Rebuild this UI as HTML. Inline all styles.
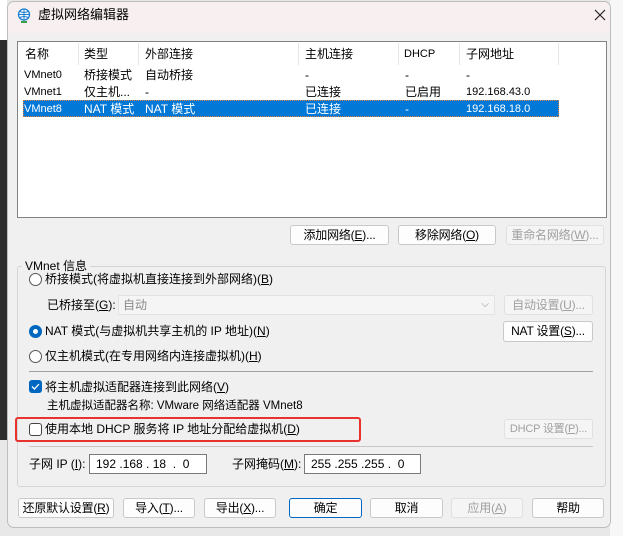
<!DOCTYPE html>
<html><head><meta charset="utf-8"><style>
*{box-sizing:border-box;margin:0;padding:0}
body{width:623px;height:536px;overflow:hidden;background:#e8e8e8;font-family:"Liberation Sans","Noto Sans CJK SC",sans-serif;font-size:12px;line-height:16px;color:#000;position:relative}
.a{position:absolute;white-space:nowrap;line-height:16px}
.btn{position:absolute;height:20px;border:1px solid #c9c9c9;border-radius:3px;background:#fdfdfd;text-align:center;line-height:18px;font-size:12px;white-space:nowrap;letter-spacing:-0.2px}
.dis{color:#a0a0a0;background:#f5f5f5;border-color:#e0e0e0}
.radio{position:absolute;width:13px;height:13px;border:1px solid #555;border-radius:50%;background:#fff}
.sep{position:absolute;height:1px;background:#a0a0a0}
.inp{position:absolute;height:20px;border:1px solid #7a7a7a;background:#fff;font-size:12px;line-height:18px;padding-left:6px;white-space:pre}
.s{font-size:11px}
</style></head><body>
<div class="a" style="left:0;top:0;width:7px;height:40px;background:#fff"></div>
<div class="a" style="left:0;top:40px;width:7px;height:400px;background:#2d2d2d"></div>
<div class="a" style="left:610px;top:0;width:13px;height:536px;background:#f7f7f7"></div>
<div class="a" style="left:7px;top:1px;width:604px;height:527px;background:#f0f0f0;border:1px solid #bdbdbd;border-radius:7px;overflow:hidden">
 <div class="a" style="left:0;top:0;width:604px;height:31px;background:#f7eff0"></div>
</div>
<svg class="a" style="left:17px;top:8px" width="14" height="16" viewBox="0 0 14 16"><circle cx="7" cy="6.5" r="5.5" fill="#fff" stroke="#1a7fd4" stroke-width="1.3"/><path d="M1.5 6.5h11M7 1v11M3 3.5q4 2 8 0M3 9.5q4-2 8 0" stroke="#1a7fd4" fill="none"/><path d="M4 14h6" stroke="#3aa04a" stroke-width="2"/></svg>
<div class="a" style="left:38px;top:7px;font-size:13px">虚拟网络编辑器</div>
<svg class="a" style="left:594px;top:9px" width="12" height="12"><path d="M1 1L11 11M11 1L1 11" stroke="#222" stroke-width="1.2"/></svg>

<div class="a" style="left:17px;top:41px;width:590px;height:177px;background:#fff;border:1px solid #828282"></div>
<div class="a" style="left:78px;top:43px;width:1px;height:22px;background:#e5e5e5"></div>
<div class="a" style="left:138px;top:43px;width:1px;height:22px;background:#e5e5e5"></div>
<div class="a" style="left:298px;top:43px;width:1px;height:22px;background:#e5e5e5"></div>
<div class="a" style="left:398px;top:43px;width:1px;height:22px;background:#e5e5e5"></div>
<div class="a" style="left:459px;top:43px;width:1px;height:22px;background:#e5e5e5"></div>
<div class="a" style="left:558px;top:43px;width:1px;height:22px;background:#e5e5e5"></div>
<div class="a" style="left:25px;top:46px">名称</div><div class="a" style="left:84px;top:46px">类型</div><div class="a" style="left:145px;top:46px">外部连接</div><div class="a" style="left:305px;top:46px">主机连接</div><div class="a s" style="left:404px;top:46px">DHCP</div><div class="a" style="left:466px;top:46px">子网地址</div>
<div class="a s" style="left:24px;top:67px">VMnet0</div><div class="a" style="left:84px;top:67px">桥接模式</div><div class="a" style="left:145px;top:67px">自动桥接</div><div class="a" style="left:305px;top:67px">-</div><div class="a" style="left:405px;top:67px">-</div><div class="a" style="left:466px;top:67px">-</div>
<div class="a s" style="left:24px;top:84px">VMnet1</div><div class="a" style="left:84px;top:84px">仅主机...</div><div class="a" style="left:145px;top:84px">-</div><div class="a" style="left:305px;top:84px">已连接</div><div class="a" style="left:405px;top:84px">已启用</div><div class="a s" style="left:466px;top:84px">192.168.43.0</div>
<div class="a" style="left:23px;top:100px;width:536px;height:17px;background:#0078d7;border:1px dotted #e08040"></div>
<div class="a s" style="left:24px;top:101px;color:#fff">VMnet8</div><div class="a" style="left:84px;top:101px;color:#fff">NAT 模式</div><div class="a" style="left:145px;top:101px;color:#fff">NAT 模式</div><div class="a" style="left:305px;top:101px;color:#fff">已连接</div><div class="a" style="left:405px;top:101px;color:#fff">-</div><div class="a s" style="left:466px;top:101px;color:#fff">192.168.18.0</div>

<div class="btn" style="left:290px;top:225px;width:99px">添加网络(<u>E</u>)...</div>
<div class="btn" style="left:398px;top:225px;width:98px">移除网络(<u>O</u>)</div>
<div class="btn dis" style="left:506px;top:225px;width:98px">重命名网络(<u>W</u>)...</div>

<div class="a" style="left:17px;top:266px;width:589px;height:221px;border:1px solid #d5d5d5;border-radius:3px"></div>
<div class="a" style="left:22px;top:258px;background:#f0f0f0;padding:0 3px">VMnet 信息</div>

<div class="radio" style="left:29px;top:273px"></div>
<div class="a" style="left:45px;top:271px">桥接模式(将虚拟机直接连接到外部网络)(<u>B</u>)</div>
<div class="a" style="left:47px;top:297px">已桥接至(<u>G</u>):</div>
<div class="a" style="left:118px;top:295px;width:377px;height:20px;border:1px solid #e3e3e3;background:#f5f5f5;color:#8a8a8a;padding-left:4px;line-height:18px">自动<span style="position:absolute;right:5px;top:0;font-size:10px">⌵</span></div>
<div class="btn dis" style="left:504px;top:295px;width:89px">自动设置(<u>U</u>)...</div>
<div class="radio" style="left:29px;top:325px;border:4px solid #0067c0"></div>
<div class="a" style="left:45px;top:323px">NAT 模式(与虚拟机共享主机的 IP 地址)(<u>N</u>)</div>
<div class="btn" style="left:503px;top:321px;width:90px;height:21px">NAT 设置(<u>S</u>)...</div>
<div class="radio" style="left:29px;top:350px"></div>
<div class="a" style="left:45px;top:348px">仅主机模式(在专用网络内连接虚拟机)(<u>H</u>)</div>
<div class="sep" style="left:29px;top:371px;width:564px"></div>
<div class="a" style="left:29px;top:380px;width:13px;height:13px;background:#0067c0;border-radius:3px"><svg width="13" height="13"><path d="M3 6.5l2.5 2.5 4.5-5" stroke="#fff" stroke-width="1.3" fill="none"/></svg></div>
<div class="a" style="left:45px;top:379px">将主机虚拟适配器连接到此网络(<u>V</u>)</div>
<div class="a" style="left:47px;top:398px;font-size:11.5px">主机虚拟适配器名称: VMware 网络适配器 VMnet8</div>
<div class="a" style="left:15px;top:417px;width:346px;height:25px;border:2px solid #e8322e;border-radius:3px"></div>
<div class="a" style="left:29px;top:423px;width:13px;height:13px;border:1px solid #444;border-radius:3px;background:#fff"></div>
<div class="a" style="left:45px;top:421px">使用本地 DHCP 服务将 IP 地址分配给虚拟机(<u>D</u>)</div>
<div class="btn dis" style="left:504px;top:419px;width:89px;font-size:11px">DHCP 设置(<u>P</u>)...</div>
<div class="sep" style="left:29px;top:446px;width:564px;background:#c8c8c8"></div>
<div class="a" style="left:29px;top:456px">子网 IP (<u>I</u>):</div>
<div class="inp" style="left:89px;top:454px;width:118px">192 .168 . 18  .  0</div>
<div class="a" style="left:232px;top:456px">子网掩码(<u>M</u>):</div>
<div class="inp" style="left:304px;top:454px;width:117px">255 .255 .255 .  0</div>

<div class="btn" style="left:18px;top:498px;width:96px">还原默认设置(<u>R</u>)</div>
<div class="btn" style="left:123px;top:498px;width:72px">导入(<u>T</u>)...</div>
<div class="btn" style="left:204px;top:498px;width:72px">导出(<u>X</u>)...</div>
<div class="btn" style="left:289px;top:498px;width:73px;border:1px solid #0067c0">确定</div>
<div class="btn" style="left:370px;top:498px;width:73px">取消</div>
<div class="btn dis" style="left:451px;top:498px;width:72px">应用(<u>A</u>)</div>
<div class="btn" style="left:532px;top:498px;width:72px">帮助</div>
</body></html>
